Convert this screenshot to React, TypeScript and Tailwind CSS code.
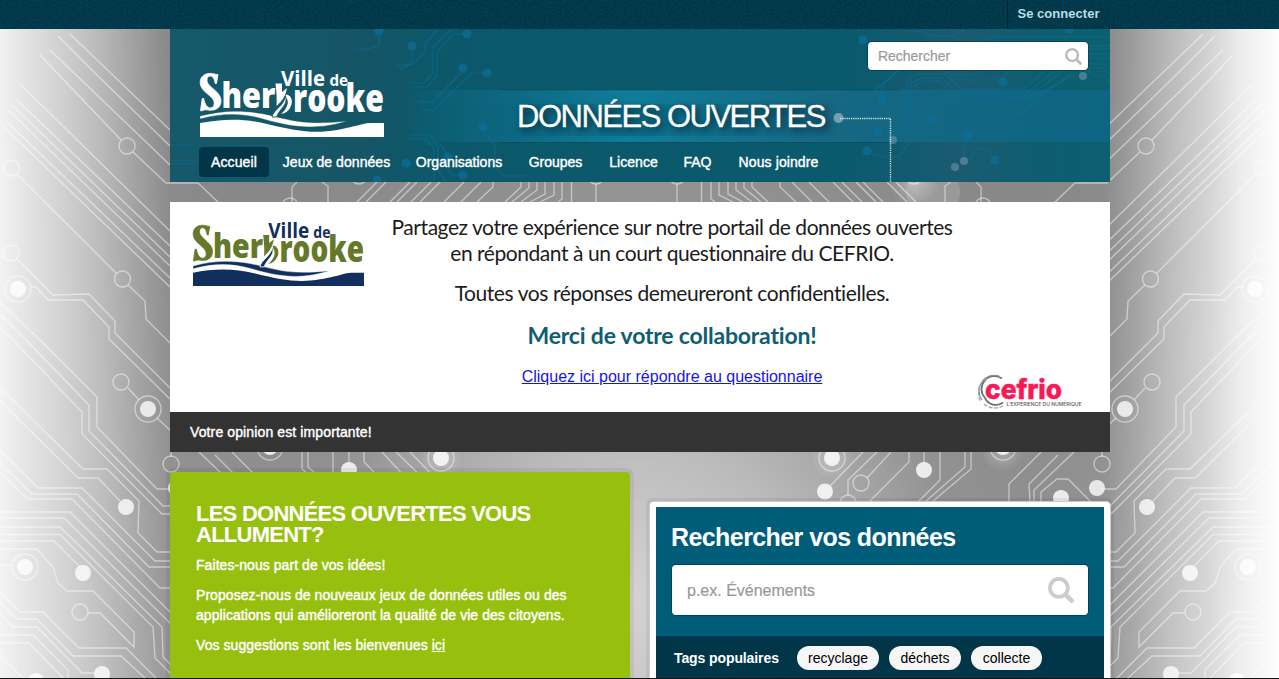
import React from "react";

const circuitLines = [
  "M70 34L170 130", "M58 36L100 78L170 146", "M50 50L170 165", "M40 55L121 140M133 152L166 183H198L219 203",
  "M20 84L170 231", "M17 100L170 246", "M12 105L170 257", "M8 110L170 266", "M6 121L170 278", "M4 127L170 287",
  "M17 174L116 273M128 285L145 301L146 319L170 343",
  "M17 259L53 295L89 294L115 321V333L170 388",
  "M30 287H36L48 300H83L109 327V339L170 399",
  "M-6 297L40 340L97 397V427L157 489H172", "M-6 308L26 340L89 405V431L163 506H172", "M-6 322L13 340L82 412V434L162 514H172",
  "M-6 382L83 469H107L139 501L138 533L157 552H172", "M-6 395L78 478H98L120 501",
  "M128 388L139 400M157 418L172 432",
  "M-6 444L38 488H82L155 561H172", "M-6 457L32 494H77L149 567H172", "M-6 467L28 499H72L160 588H172",
  "M-6 512H70L172 614", "M-6 518H64L172 625", "M-6 527H60L162 627L163 657L172 666", "M-6 534.5H60L153 627L155 658L172 675",
  "M-6 541H54L80 567", "M-6 549H37L53 567L58 583L67 591H93L134 632V647L100 613H88", "M-6 565H12",
  "M-6 586L20 612H43L79 648H126L157 679", "M-6 597L17 619H37L73 656H121L146 679", "M-6 607L13 627H37L82 673H95",
  "M-6 635H33L68 670V679", "M-6 643H29L64 679", "M-6 649L24 679",
  "M322 182L328 186V202", "M297 182L292 187V202",
  "M357 202L377 182", "M366 202L386 182", "M390 202L410 182", "M397 202L417 182", "M411 202L431 182", "M420 202L440 182",
  "M444 202L464 182", "M461 202L481 182", "M477 202L493 187V182", "M505 202L521 187V182", "M512 202L529 188V182",
  "M521 202L537 190V182", "M530 202L545 194V182", "M540 202L554 195V182", "M558 202L562 199V182", "M571.5 182V202", "M596 184V202",
];

const circuitLinesFar = [
  "M830 486L863 452", "M848 495V480L877 452", "M867 478L891 452",
  "M869 502L909 462V452", "M918 502L940 480V452", "M925 502L965 467V452", "M932 502L971 469V452", "M924 452V465",
  "M1009 502V484L1041 452", "M1030 502L1029 484L1058 455", "M1034 502V490L1074 452", "M1041 502V492L1057 479H1068L1091 502",
  "M1102 440V457",
];

const rings = [
  [127, 146, 8], [11, 168, 8], [122.5, 279, 8], [11, 253, 8], [18, 289, 13], [121, 382, 8], [148, 409, 13],
  [25, 567, 13], [80, 612, 8], [359, 176, 8], [290, 206, 8], [596, 176, 8], [171, 464, 8],
];
const farRings = [[832, 458, 13], [861, 483, 8], [848, 503, 8], [1003, 447, 13]];
const dots = [[18, 289], [176, 488], [126, 507], [148, 409], [25, 567], [83, 573], [102, 674], [36, 681]];
const farDots = [[832, 458], [825, 491.5], [924, 470], [1003, 447], [1061, 498]];

function CircuitHalf() {
  return (
    <g fill="none" stroke="#fff" strokeOpacity=".48" strokeWidth="1.35">
      {circuitLines.map((d) => <path key={d} d={d} />)}
      {rings.map(([x, y, r]) => <circle key={`${x}-${y}`} cx={x} cy={y} r={r} />)}
      {dots.map(([x, y]) => <circle key={`${x}-${y}`} cx={x} cy={y} r="8" fill="#fff" fillOpacity=".78" stroke="none" />)}
      <g transform="translate(1273 0) scale(-1 1)">
        {circuitLinesFar.map((d) => <path key={d} d={d} />)}
        {farRings.map(([x, y, r]) => <circle key={`${x}-${y}`} cx={x} cy={y} r={r} />)}
        {farDots.map(([x, y]) => <circle key={`${x}-${y}`} cx={x} cy={y} r="8" fill="#fff" fillOpacity=".82" stroke="none" />)}
      </g>
    </g>
  );
}

function Backdrop() {
  return (
    <svg className="absolute inset-0 -z-10" width="1279" height="679" viewBox="0 0 1279 679">
      <defs>
        <linearGradient id="side" gradientUnits="userSpaceOnUse" x1="-6" x2="1279" y1="0" y2="0">
          <stop offset="0" stopColor="#f6f6f6" />
          <stop offset=".02" stopColor="#e6e6e6" />
          <stop offset=".055" stopColor="#cecece" />
          <stop offset=".085" stopColor="#b6b6b6" />
          <stop offset=".115" stopColor="#9a9a9a" />
          <stop offset=".137" stopColor="#868686" />
          <stop offset=".2" stopColor="#828282" />
          <stop offset=".5" stopColor="#909090" />
          <stop offset=".8" stopColor="#828282" />
          <stop offset=".863" stopColor="#868686" />
          <stop offset=".885" stopColor="#9a9a9a" />
          <stop offset=".915" stopColor="#b9b9b9" />
          <stop offset=".945" stopColor="#d2d2d2" />
          <stop offset=".97" stopColor="#ececec" />
          <stop offset="1" stopColor="#fefefe" />
        </linearGradient>
        <linearGradient id="lower" x1="0" x2="0" y1="0" y2="1">
          <stop offset="0" stopColor="#fff" stopOpacity="0" />
          <stop offset="1" stopColor="#fff" stopOpacity=".14" />
        </linearGradient>
        <radialGradient id="glow" gradientUnits="userSpaceOnUse" cx="636" cy="600" r="330">
          <stop offset="0" stopColor="#fff" stopOpacity=".55" />
          <stop offset=".5" stopColor="#fff" stopOpacity=".33" />
          <stop offset="1" stopColor="#fff" stopOpacity="0" />
        </radialGradient>
        <radialGradient id="spot">
          <stop offset="0" stopColor="#fff" stopOpacity=".9" />
          <stop offset="1" stopColor="#fff" stopOpacity="0" />
        </radialGradient>
      </defs>
      <rect width="1279" height="679" fill="url(#side)" />
      <rect width="1279" height="679" fill="url(#lower)" />
      <rect width="1279" height="679" fill="url(#glow)" />
      <circle cx="933" cy="192" r="27" fill="#fff" fillOpacity=".14" />
      <circle cx="914" cy="180" r="26" fill="url(#spot)" fillOpacity=".4" />
      <CircuitHalf />
      <g transform="translate(1273 0) scale(-1 1)"><CircuitHalf /></g>
      {[441, 832, 1003].map((x) => <circle key={x} cx={x} cy={x === 1003 ? 450 : 458} r="22" fill="url(#spot)" fillOpacity=".3" />)}
    </svg>
  );
}

const headerLines = [
  "M1110 37H987L983 42", "M1110 46H1088", "M1110 49H1088", "M1110 54H1088", "M1110 58H1088", "M1088 64H1104L1110 69",
  "M1088 68H1103L1110 75", "M1110 85L1105 76H1096L1088 71", "M911 31H921L934 36H953L965 30",
  "M899 70L872 93H860", "M882 99V86L898 70", "M933 115V107L940 99H1031L1070 76H1083",
  "M893 140L911 120V83L922 78H942L957 93H1027L1055 70", "M893 135L907 118V80L919 74H945L961 89H1024L1046 70",
  "M899 135L915 121V85L925 81H939L955 97H1029L1062 71", "M967 130L973 120L992 113H1024L1035 100L1070 75",
  "M967 140L963 150L964 161M970 160L977 149H987L995 160", "M870 153L884 157H899L911 140V126L933 107",
  "M940 70L954 75H977L984 70", "M950 75L957 80H1000L1010 70",
  "M467 34H453L437 52V75L427 87H410", "M460 29H451L433 48V73L424 83H408", "M412 52V62L400 70", "M438 29L425 44V52L412 65H396",
  "M463 71L433 102H418", "M487 73H472L434 110H422", "M484 132L495 145V167L503 176H530", "M410 135H430L438 147V170L446 182",
  "M408 139H427L434 149V182", "M463 175H452L446 166V152L440 144H424", "M379 31V45L368 49H355", "M170 145H192M170 161H197M170 164H197",
];
const headerDots = [
  [467, 34], [412, 46], [463, 68], [487, 73], [483, 127], [463, 175], [406, 163], [448, 157], [377, 180], [379, 31],
  [863, 40], [1069, 29], [1003, 82], [882, 99], [933, 119], [967, 135], [995, 160], [867, 151], [878, 132],
];

function HeaderArt() {
  return (
    <svg className="absolute inset-0 -z-10" width="940" height="153" viewBox="170 29 940 153">
      <defs>
        <linearGradient id="head" x1="0" x2="1" y1="0" y2="0">
          <stop offset="0" stopColor="#15596a" /><stop offset=".2" stopColor="#155566" /><stop offset=".28" stopColor="#0c586a" />
          <stop offset=".72" stopColor="#0a5a6d" /><stop offset=".84" stopColor="#1a5b71" /><stop offset=".92" stopColor="#0e5d6e" /><stop offset="1" stopColor="#0b6070" />
        </linearGradient>
        <linearGradient id="band" gradientUnits="userSpaceOnUse" x1="400" x2="1110" y1="0" y2="0">
          <stop offset="0" stopColor="#0c6b85" stopOpacity="0" /><stop offset=".17" stopColor="#0d6a84" />
          <stop offset=".32" stopColor="#0f7d9a" /><stop offset=".6" stopColor="#166883" /><stop offset="1" stopColor="#0c6583" />
        </linearGradient>
        <linearGradient id="shade" gradientUnits="userSpaceOnUse" x1="470" x2="860" y1="0" y2="0">
          <stop offset="0" stopColor="#003b4b" stopOpacity="0" /><stop offset=".4" stopColor="#003b4b" stopOpacity=".2" /><stop offset="1" stopColor="#003b4b" stopOpacity="0" />
        </linearGradient>
      </defs>
      <rect x="170" y="29" width="940" height="153" fill="url(#head)" />
      <rect x="400" y="90" width="710" height="52" fill="url(#band)" />
      <rect x="470" y="104" width="390" height="32" fill="url(#shade)" />
      <path d="M500 90H900M500 142.5H900" stroke="#053e50" strokeOpacity=".35" />
      <g fill="none" stroke="#0f7099" strokeOpacity=".55" strokeWidth="1.2">{headerLines.map((d) => <path key={d} d={d} />)}</g>
      <g fill="#0d6d98" fillOpacity=".7">{headerDots.map(([x, y]) => <circle key={`${x}-${y}`} cx={x} cy={y} r="4.6" />)}</g>
      <g fill="#8ba6b8" fillOpacity=".45">
        {[[1083, 76], [893, 140], [955, 167], [964, 161]].map(([x, y]) => <circle key={x} cx={x} cy={y} r="4" />)}
        <circle cx="838.5" cy="118" r="5" fillOpacity=".85" />
      </g>
      <path d="M840 118.5H891M890.5 119V182" fill="none" stroke="#d9e8ee" strokeWidth="1.4" strokeDasharray="1.2 1" />
    </svg>
  );
}

function CityLogo({ main, accent, hole, className }: { main: string; accent: string; hole: string; className: string }) {
  return (
    <svg className={className} viewBox="0 0 184 67" preserveAspectRatio="none" overflow="visible" fontFamily="'Open Sans', 'Noto Sans', sans-serif" fontWeight="700">
      <g fill={main}>
        <path d="M18 4.5L16.5 13.5H15.2C14.4 8.6 12.8 6 10.3 6C7.8 6 7 8 7 10.2C7 13.6 10 15.8 14 19.5C18.6 23.6 21 26.6 21 31C21 37 16.3 40.7 9.8 40.2C6.5 39.7 4.2 39.4 2.3 40.7H.5L2.2 28.5H3.7C4.8 34.3 7 37.9 10.4 37.9C13 37.9 14.2 36 14.2 33.4C14.2 29.6 11.4 27.2 7.4 23.8C2.6 19.8.2 16.8.2 12.3C.2 6.8 4.5 3.4 10 3.4C13.5 3.4 15.5 4.6 18 4.5Z" stroke={main} strokeWidth=".8" />
        <text x="21.5" y="37.6" fontSize="36" fontWeight="800" textLength="54" lengthAdjust="spacingAndGlyphs">her</text>
        <path d="M75.5 13.5H82V22L87 18C86 24 84 28 80.5 32L76.5 36C77 29 76.5 22 75.5 13.5Z" />
        <path d="M86 24.5C92 25 93.3 32 90.5 37C88.5 41 85.5 43.5 81 43.8C86.5 39.5 88.5 34 87.6 30.5C87.2 28.5 86.2 28.3 85 28.8Z" />
        <text x="93" y="42" fontSize="38" fontWeight="800" textLength="91" lengthAdjust="spacingAndGlyphs">rooke</text>
      </g>
      <g fill={accent}>
        <text x="81" y="16.3" fontSize="21.5" textLength="44" lengthAdjust="spacingAndGlyphs">Ville</text>
        <text x="129.5" y="16.3" fontSize="16" textLength="18.5" lengthAdjust="spacingAndGlyphs">de</text>
        <path d="M0 46C24 40 42 40 64 44C88 49 102 56 147 51C116 61 91 57 63 49C42 43 22 43 0 49Z" stroke={hole} strokeWidth=".4" />
        <path d="M72 47C73 40 84 36 85.5 26C88.5 35 80 38 76.5 47Z" stroke={hole} strokeWidth=".9" />
        <path d="M0 53C22 49 43 48 67 54C96 61 114 64 137 60C158 56 164 53 171 53H184V67H0Z" />
      </g>
    </svg>
  );
}

function CefrioLogo() {
  return (
    <svg className="block h-9 w-[106px]" viewBox="978 374 106 36" fontFamily="Inter, sans-serif">
      <g fill="none" stroke="#6f727b">
        <path d="M1002 378.5A13 13 0 0 0 985 398A12 12 0 0 0 1003 402.5" strokeWidth="1.8" />
        <path d="M999 376A15.5 15.5 0 0 0 982 400" strokeWidth="1.2" stroke="#85888f" />
        <path d="M987 378A17 17 0 0 0 981 402M984 404A17 17 0 0 0 1003 406" strokeWidth="1.3" strokeDasharray="4 1.5" stroke="#a4a6ac" />
      </g>
      <text x="985" y="399" fontSize="27" fontWeight="800" fill="#f71a55" stroke="#f71a55" strokeWidth=".5" textLength="77" lengthAdjust="spacingAndGlyphs">cefrio</text>
      <text x="1006.5" y="405.6" fontSize="5.4" fontWeight="500" fill="#54565e" textLength="75" lengthAdjust="spacingAndGlyphs">L'EXPÉRIENCE DU NUMÉRIQUE</text>
    </svg>
  );
}

function SearchIcon({ className }: { className: string }) {
  return (
    <svg className={className} viewBox="0 0 27 27" fill="none" stroke="currentColor">
      <circle cx="11.3" cy="11.3" r="9.3" strokeWidth="3.9" />
      <path d="M18 18L24.5 24.5" strokeWidth="4.6" strokeLinecap="round" />
    </svg>
  );
}

const nav = [
  { label: "Accueil", cls: "w-[70px] rounded bg-[#003647] tracking-[0.1px]" },
  { label: "Jeux de données", cls: "ml-0.5 w-[131px] tracking-[0.05px]" },
  { label: "Organisations", cls: "ml-0.5 w-[110px]" },
  { label: "Groupes", cls: "ml-0.5 w-[79px]" },
  { label: "Licence", cls: "ml-px w-[75px] tracking-[0.05px]" },
  { label: "FAQ", cls: "w-[53px]" },
  { label: "Nous joindre", cls: "ml-0.5 w-[105px] tracking-[0.1px]" },
];

export default function App() {
  return (
    <div className="relative isolate flex h-[679px] w-[1279px] flex-col overflow-hidden font-['Liberation_Sans',Arial,sans-serif] text-sm text-white">
      <Backdrop />
      <div className="relative isolate flex h-[29px] shrink-0 bg-[#003647]">
        <svg className="absolute inset-0 -z-10 opacity-[.07]" width="1279" height="29">
          <filter id="grain"><feTurbulence type="fractalNoise" baseFrequency=".45" numOctaves="2" /><feColorMatrix values="0 0 0 0 .1  0 0 0 0 .5  0 0 0 0 .6  0 2 0 0 -.6" /></filter>
          <rect width="1279" height="29" filter="url(#grain)" />
        </svg>
        <a className="ml-[1007px] border-l border-[#00202b] pl-[9.5px] text-[13px] leading-[27px] font-bold tracking-[0.03px] text-[#b9dce5]">Se connecter</a>
      </div>

      <div className="ml-[170px] flex w-[940px] flex-1 flex-col">
        <header className="relative isolate flex h-[153px] flex-col">
          <HeaderArt />
          <div className="flex h-[118px] items-start">
            <CityLogo main="#fff" accent="#fff" hole="#155566" className="mt-[41px] ml-[30px] h-[67px] w-[184px] shrink-0" />
            <h1 className="mt-[68px] ml-[133px] text-[31px] leading-10 tracking-[-1.5px] whitespace-nowrap [text-shadow:3px_3px_7px_rgba(0,20,35,.85)] [-webkit-text-stroke:0.3px_white]">DONNÉES OUVERTES</h1>
            <div className="mt-[13px] mr-[22px] ml-auto flex h-7 w-[220px] items-center justify-between rounded-sm bg-white pr-1.5 pl-2.5 text-[#999] shadow-[0_0_0_1px_rgba(0,50,65,.5)]">
              <span className="tracking-[-0.02px] [-webkit-text-stroke:0.2px_#999]">Rechercher</span>
              <SearchIcon className="h-[17px] w-[17px] text-[#bcbcbc]" />
            </div>
          </div>
          <nav className="ml-[29px] flex h-[30px] text-center leading-[30px] whitespace-nowrap [-webkit-text-stroke:0.4px_white]">
            {nav.map((item) => <a key={item.label} className={item.cls}>{item.label}</a>)}
          </nav>
        </header>

        <section className="mt-5 flex h-[210px] bg-white text-black">
          <CityLogo main="#66782a" accent="#122e5c" hole="#fff" className="mt-5 ml-[23px] h-16 w-[171px] shrink-0" />
          <div className="ml-[18px] w-[580px] pt-3 text-center font-['Lato',sans-serif] whitespace-nowrap text-[#1c1c1c] [font-variant-ligatures:none]">
            <p className="text-[21px] leading-[26px] tracking-[-0.45px]">Partagez votre expérience sur notre portail de données ouvertes<br />en répondant à un court questionnaire du CEFRIO.</p>
            <p className="mt-[14px] text-[21px] leading-[26px] tracking-[-0.42px]">Toutes vos réponses demeureront confidentielles.</p>
            <p className="mt-[15px] text-[23px] leading-7 font-bold tracking-[-0.2px] text-[#0f5d70]">Merci de votre collaboration!</p>
            <p className="mt-4 font-['Liberation_Sans',Arial,sans-serif] text-base leading-6"><a className="text-[#1414ee] underline">Cliquez ici pour répondre au questionnaire</a></p>
          </div>
          <div className="mt-[172px] ml-4"><CefrioLogo /></div>
        </section>
        <div className="h-10 bg-[#333] pl-5 leading-10 tracking-[0.12px] [-webkit-text-stroke:0.4px_white]">Votre opinion est importante!</div>

        <main className="flex flex-1 justify-between">
          <section className="mt-5 w-[460px] rounded-t bg-[#97bf0d] pt-[31px] pl-[26px] shadow-[0_0_0_4px_rgba(0,0,0,.06)]">
            <h2 className="text-[22px] leading-[21px] font-bold tracking-[-0.75px] whitespace-nowrap">LES DONNÉES OUVERTES VOUS<br />ALLUMENT?</h2>
            <div className="mt-[10px] space-y-2.5 leading-5 tracking-[0.06px] whitespace-nowrap [-webkit-text-stroke:0.4px_white]">
              <p>Faites-nous part de vos idées!</p>
              <p>Proposez-nous de nouveaux jeux de données utiles ou des<br />applications qui amélioreront la qualité de vie des citoyens.</p>
              <p>Vos suggestions sont les bienvenues <a className="underline">ici</a></p>
            </div>
          </section>
          <section className="mt-[50px] flex w-[460px] flex-col rounded-t border-x-[6px] border-t-[5px] border-white bg-[#005d7a] shadow-[0_0_0_1px_#ccc,0_0_0_4px_rgba(0,0,0,.06)]">
            <h2 className="mt-[15px] ml-[15px] text-[25px] leading-[30px] font-bold tracking-[-0.58px]">Rechercher vos données</h2>
            <div className="mt-[13px] ml-4 flex h-[50px] w-[416px] items-center justify-between rounded-sm bg-white pr-3.5 pl-[15px] text-base text-[#999] shadow-[0_0_0_1px_rgba(0,50,65,.6)]">
              <span className="pt-px [-webkit-text-stroke:0.2px_#999]">p.ex. Événements</span>
              <SearchIcon className="h-[26px] w-[26px] text-[#ccc]" />
            </div>
            <div className="mt-[21px] flex flex-1 items-start gap-2.5 bg-[#003647] pt-2.5 pl-[18px] text-black">
              <span className="w-[113px] leading-6 font-bold tracking-[-0.1px] text-white">Tags populaires</span>
              <a className="h-6 w-[82px] rounded-full bg-[#f6f6f6] text-center leading-6">recyclage</a>
              <a className="h-6 w-[72px] rounded-full bg-[#f6f6f6] text-center leading-6">déchets</a>
              <a className="h-6 w-[71px] rounded-full bg-[#f6f6f6] text-center leading-6">collecte</a>
            </div>
          </section>
        </main>
      </div>
      <div className="h-px shrink-0 bg-[#151515]" />
    </div>
  );
}
